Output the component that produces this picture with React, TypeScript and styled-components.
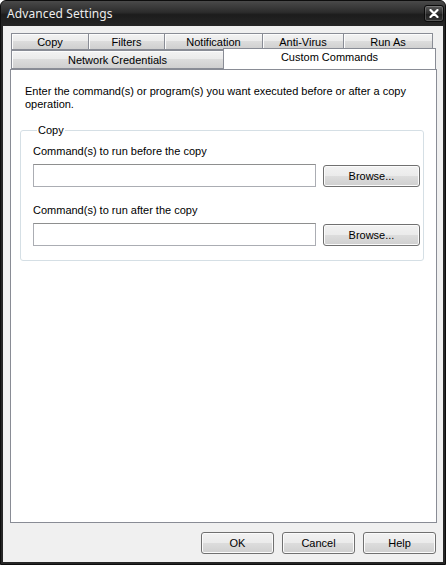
import React, { useState } from "react";
import styled, { createGlobalStyle } from "styled-components";

const GlobalStyle = createGlobalStyle`
  html, body {
    margin: 0;
    padding: 0;
    background: #ffffff;
  }
  * {
    box-sizing: border-box;
  }
`;

const Window = styled.div`
  width: 446px;
  height: 565px;
  display: flex;
  flex-direction: column;
  background: #262626;
  border-radius: 6px 6px 0 0;
  border: 1px solid #0d0d0d;
  overflow: hidden;
  font-family: "Liberation Sans", Arial, sans-serif;
  font-size: 11px;
  color: #000;
`;

const TitleBar = styled.div`
  height: 25px;
  flex: none;
  display: flex;
  align-items: center;
  justify-content: space-between;
  padding: 0 1px 0 6px;
  background: linear-gradient(#4a4a4a 0%, #2c2c2c 45%, #1c1c1c 55%, #262626 100%);
`;

const Title = styled.span`
  font-family: "Noto Sans", "Open Sans", sans-serif;
  font-size: 12px;
  color: #ececec;
  letter-spacing: 0.1px;
`;

const CloseButton = styled.div`
  width: 20px;
  height: 17px;
  display: flex;
  align-items: center;
  justify-content: center;
  border-radius: 3px;
  border: 1px solid #0a0a0a;
  background: linear-gradient(#5a5a5a, #2e2e2e 50%, #1e1e1e 51%, #333);
  box-shadow: inset 0 0 0 1px rgba(255, 255, 255, 0.18);
`;

const Client = styled.div`
  flex: 1;
  margin: 0 2px 2px 2px;
  background: #f0f0f0;
  display: flex;
  flex-direction: column;
  padding: 7px 6px 8px 7px;
`;

const TabRow = styled.div`
  display: flex;
  padding-left: 1px;
  height: 17px;
`;

const Tab = styled.div<{ width: number; selected?: boolean }>`
  width: ${(p) => p.width}px;
  height: ${(p) => (p.selected ? "21px" : "17px")};
  margin-top: ${(p) => (p.selected ? "-2px" : "0")};
  position: relative;
  z-index: ${(p) => (p.selected ? 2 : 1)};
  display: flex;
  align-items: center;
  justify-content: center;
  padding-bottom: ${(p) => (p.selected ? "4px" : "0")};
  border: 1px solid #898c95;
  border-bottom: ${(p) => (p.selected ? "none" : "1px solid #898c95")};
  background: ${(p) =>
    p.selected
      ? "#ffffff"
      : "linear-gradient(#f3f3f3 0%, #ebebeb 45%, #dcdcdc 50%, #cfcfcf 100%)"};
  box-shadow: ${(p) => (p.selected ? "none" : "inset 1px 1px 0 #fcfcfc")};
  cursor: default;
  color: #000;
`;

const SecondRow = styled(TabRow)`
  height: 19px;
  align-items: flex-end;
  & > div:not([data-selected="true"]) {
    height: 19px;
  }
`;

const Panel = styled.div`
  flex: 1;
  background: #ffffff;
  border: 1px solid #898c95;
  padding: 15px 2px 0 14px;
  display: flex;
  flex-direction: column;
`;

const Description = styled.p`
  margin: 0;
  line-height: 13px;
  width: 408px;
`;

const Group = styled.fieldset`
  margin: 13px 0 0 -5px;
  width: 404px;
  padding: 1px 0 14px 12px;
  border: 1px solid #d5dfe5;
  border-radius: 3px;
  box-shadow: inset 1px 1px 0 #fff;
`;

const Legend = styled.legend`
  padding: 0 1px;
  margin-left: 4px;
  line-height: 13px;
`;

const FieldLabel = styled.div<{ first?: boolean }>`
  line-height: 13px;
  margin-top: ${(p) => (p.first ? "7px" : "17px")};
`;

const FieldRow = styled.div`
  display: flex;
  align-items: center;
  gap: 7px;
  margin-top: 6px;
`;

const TextBox = styled.input`
  width: 283px;
  height: 23px;
  border: 1px solid #abadb3;
  border-top-color: #8e8f8f;
  background: #fff;
  padding: 0 3px;
  font: inherit;
  outline: none;
`;

const Button = styled.button<{ width?: number }>`
  width: ${(p) => p.width ?? 97}px;
  height: 22px;
  padding: 0;
  font-family: "Liberation Sans", Arial, sans-serif;
  font-size: 11px;
  color: #000;
  border: 1px solid #707070;
  border-radius: 3px;
  background: linear-gradient(#f2f2f2 0%, #ebebeb 48%, #dddddd 50%, #cfcfcf 100%);
  box-shadow: inset 0 0 0 1px #fbfbfb;
  cursor: default;
`;

const Footer = styled.div`
  display: flex;
  justify-content: flex-end;
  gap: 8px;
  margin-top: 9px;
  padding-right: 1px;
`;

const tabsTop = [
  { title: "Copy", width: 78 },
  { title: "Filters", width: 77 },
  { title: "Notification", width: 99 },
  { title: "Anti-Virus", width: 82 },
  { title: "Run As", width: 90 },
];

const tabsBottom = [
  { title: "Network Credentials", width: 213 },
  { title: "Custom Commands", width: 213 },
];

export default function App() {
  const [active, setActive] = useState("Custom Commands");

  return (
    <>
      <GlobalStyle />
      <Window>
        <TitleBar>
          <Title>Advanced Settings</Title>
          <CloseButton>
            <svg width="10" height="9" viewBox="0 0 10 9">
              <path d="M1.5 1 L8.5 8 M8.5 1 L1.5 8" stroke="#fff" strokeWidth="2.2" strokeLinecap="round" />
            </svg>
          </CloseButton>
        </TitleBar>
        <Client>
          <TabRow>
            {tabsTop.map((t, i) => (
              <Tab
                key={t.title}
                width={t.width}
                style={{ marginLeft: i === 0 ? 0 : -1 }}
                onClick={() => setActive(t.title)}
              >
                {t.title}
              </Tab>
            ))}
          </TabRow>
          <SecondRow>
            {tabsBottom.map((t, i) => (
              <Tab
                key={t.title}
                width={t.width}
                selected={active === t.title}
                data-selected={active === t.title}
                style={{ marginLeft: i === 0 ? 0 : -1 }}
                onClick={() => setActive(t.title)}
              >
                {t.title}
              </Tab>
            ))}
          </SecondRow>
          <Panel>
            <Description>
              Enter the command(s) or program(s) you want executed before or after a copy operation.
            </Description>
            <Group>
              <Legend>Copy</Legend>
              <FieldLabel first>Command(s) to run before the copy</FieldLabel>
              <FieldRow>
                <TextBox />
                <Button>Browse...</Button>
              </FieldRow>
              <FieldLabel>Command(s) to run after the copy</FieldLabel>
              <FieldRow>
                <TextBox />
                <Button>Browse...</Button>
              </FieldRow>
            </Group>
          </Panel>
          <Footer>
            <Button width={73}>OK</Button>
            <Button width={73}>Cancel</Button>
            <Button width={73}>Help</Button>
          </Footer>
        </Client>
      </Window>
    </>
  );
}
